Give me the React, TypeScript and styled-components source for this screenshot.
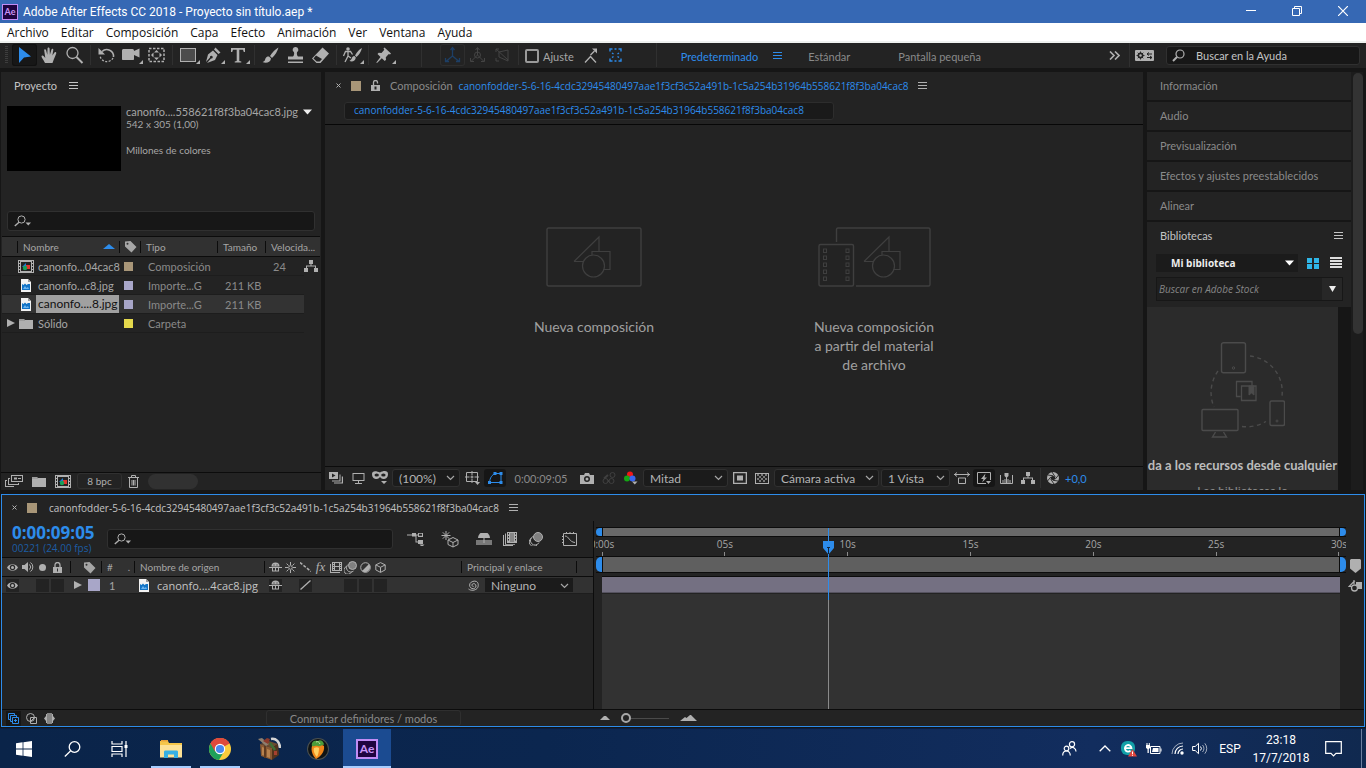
import React from "react";
import styled, { createGlobalStyle, css } from "styled-components";

const ui = '"Lato", "Open Sans", sans-serif';
const sys = '"Open Sans", "Noto Sans", sans-serif';
const narrow = '"Roboto", "Open Sans", sans-serif';

const c = {
  gap: "#161616",
  panel: "#232323",
  head: "#313131",
  field: "#171717",
  line: "#303030",
  text: "#a6a6a6",
  bright: "#c4c4c4",
  dim: "#8a8a8a",
  icon: "#b0b0b0",
  blue: "#2d8ceb",
};

const GlobalStyle = createGlobalStyle`
  *, *::before, *::after { box-sizing: border-box; }
  body { margin: 0; background: ${c.gap}; font-family: ${ui}; font-size: 11px; color: ${c.text}; }
  button, input, select { font: inherit; color: inherit; margin: 0; padding: 0; border: 0; background: none; border-radius: 0; }
  a { color: inherit; text-decoration: none; }
  h2, p { margin: 0; font-weight: 400; font-size: inherit; }
  svg { display: block; flex: none; }
`;

const Shell = styled.div`
  display: grid;
  grid-template-columns: minmax(0, 1fr);
  grid-template-rows: auto auto auto minmax(300px, 1fr) auto auto;
  height: 100vh;
`;

/* ---------- glyphs ---------- */

type GlyphProps = { w: number; h: number; children: React.ReactNode; line?: boolean };
const Glyph = ({ w, h, children, line }: GlyphProps) => (
  <svg
    width={w}
    height={h}
    viewBox={`0 0 ${w} ${h}`}
    fill={line ? "none" : "currentColor"}
    stroke={line ? "currentColor" : "none"}
    aria-hidden="true"
  >
    {children}
  </svg>
);

const MenuLines = () => (
  <Glyph w={9} h={8}>
    <path d="M0 0h9v1H0zM0 3h9v1H0zM0 6h9v1H0z" />
  </Glyph>
);
const CloseX = () => (
  <Glyph w={5} h={5} line>
    <path d="M.5.5l4 4M4.500.5l-4 4" />
  </Glyph>
);
const Chevron = () => (
  <Glyph w={9} h={6} line>
    <path d="M1 1l3.500 3.500L8 1" strokeWidth="1.200" />
  </Glyph>
);
const Caret = () => (
  <Glyph w={9} h={6}>
    <path d="M0 .5h9L4.500 5.500z" />
  </Glyph>
);
const SearchCaret = () => (
  <Glyph w={18} h={12}>
    <g fill="none" stroke="currentColor">
      <circle cx="7.500" cy="4.500" r="3.600" />
      <path d="M5 7.200L.8 11" strokeWidth="1.400" />
    </g>
    <path d="M11.500 7.500h5.500L14.300 10.500z" />
  </Glyph>
);
const Lens = () => (
  <Glyph w={13} h={13} line>
    <circle cx="8" cy="5" r="4" strokeWidth="1.200" />
    <path d="M5 8L1 12" strokeWidth="2" />
  </Glyph>
);
const Corner = () => <path d="M24 16v4h-4z" />;

const Tool = ({ children, corner }: { children: React.ReactNode; corner?: boolean }) => (
  <Glyph w={25} h={22}>
    {children}
    {corner && <Corner />}
  </Glyph>
);

const Tag = () => (
  <Glyph w={13} h={13}>
    <path d="M1 1.500L6.500 1 12.500 7 7.500 12.500 1 6.500zM3.500 2.700a1 1 0 100 2 1 1 0 000-2z" fillRule="evenodd" />
  </Glyph>
);
const CompIcon = () => (
  <Glyph w={16} h={13}>
    <path d="M0 0h16v13H0z" />
    <path d="M3 2h10v9H3z" fill="#222" />
    <path d="M1 1h1v2H1zM1 4h1v2H1zM1 7h1v2H1zM1 10h1v2H1zM14 1h1v2h-1zM14 4h1v2h-1zM14 7h1v2h-1zM14 10h1v2h-1z" fill="#222" />
    <path d="M4 7l4-4v4z" fill="#1f7fd8" />
    <path d="M8 5h4v4H8z" fill="#e0342c" />
    <circle cx="7" cy="8" r="2.200" fill="#18a05a" />
  </Glyph>
);
const ImageFile = () => (
  <Glyph w={10} h={13}>
    <path d="M0 0h7l3 3v10H0z" fill="#f2f2f2" />
    <path d="M7 0l3 3H7z" fill="#9a9a9a" />
    <path d="M1 5l1.500 1L4 4.500 5.500 6 7 5l2 0v6H1z" fill="#1173c6" />
    <path d="M2 10l2-3 1.500 2L7 8l1 2z" fill="#6bb4f0" />
  </Glyph>
);
const Folder = () => (
  <Glyph w={14} h={11}>
    <path d="M0 1h5l1 1h8v9H0z" />
    <path d="M0 2h6" stroke="#6f6f6f" strokeWidth=".6" />
  </Glyph>
);
const Flow = () => (
  <Glyph w={14} h={12}>
    <path d="M5 0h4v4H7.500v1.500H12V8h2v4H10V8h1V6.500H3V8h1v4H0V8h2V5.500h4.500V4H5z" />
  </Glyph>
);
const Eye = () => (
  <Glyph w={11} h={7}>
    <path d="M0 3.500C2.500-.8 8.500-.8 11 3.500 8.500 7.800 2.500 7.800 0 3.500z" />
    <circle cx="5.500" cy="3.500" r="2.700" fill="#2a2a2a" />
    <circle cx="5.500" cy="3.500" r="1.500" />
  </Glyph>
);
const Shy = () => (
  <Glyph w={13} h={10}>
    <path d="M2.500 4.500a4 4 0 018 0z" />
    <path d="M0 5h13v1H0zM3 8.500h7v1H3zM6 5h1v4H6z" />
    <path d="M4.500 2.500h1v1h-1zM7.500 2.500h1v1h-1z" fill="#2a2a2a" />
    <path d="M3.500 6v3M9.500 6v3" stroke="currentColor" />
  </Glyph>
);
const FilmStack = () => (
  <Glyph w={12} h={11}>
    <path d="M0 2h1v8h9v1H0z" />
    <path d="M2 0h10v9H2z" />
    <path d="M5 1h4v3H5zM5 5h4v3H5zM3 1h1v1H3zM3 3h1v1H3zM3 5h1v1H3zM3 7h1v1H3zM10 1h1v1h-1zM10 3h1v1h-1zM10 5h1v1h-1zM10 7h1v1h-1z" fill="#333" />
  </Glyph>
);
const MotionBlur = () => (
  <Glyph w={13} h={13}>
    <circle cx="8.500" cy="4.500" r="4" fill="#808080" stroke="currentColor" />
    <path d="M4 3.500a4.200 4.200 0 105.500 6.500M2.500 5.500a4 4 0 105 5.500" fill="none" stroke="currentColor" />
  </Glyph>
);
const Cube = () => (
  <Glyph w={11} h={11} line>
    <path d="M5.500.6l4.700 2.300v5L5.500 10.400.8 7.900v-5zM.8 2.900l4.700 2.400 4.700-2.400M5.500 5.300v5" />
  </Glyph>
);

/* ---------- window chrome ---------- */

const TitleBar = styled.header`
  display: flex;
  align-items: center;
  height: 23px;
  padding-left: 2px;
  background: #3668b4;
  color: #fff;
  font: 12px/16px ${narrow};
`;
const AeBadge = styled.span<{ $big?: boolean }>`
  display: grid;
  place-items: center;
  width: ${(p) => (p.$big ? 22 : 16)}px;
  height: ${(p) => (p.$big ? 20 : 16)}px;
  border: ${(p) => (p.$big ? 2 : 1)}px solid #c18df5;
  background: #1f0540;
  color: #c795f7;
  font: ${(p) => (p.$big ? "700 12px/14px" : "700 9px/12px")} ${ui};
`;
const Title = styled.h2`
  flex: 1;
  padding-left: 5px;
`;
const WinButton = styled.button`
  display: grid;
  place-items: center;
  width: 46px;
  height: 23px;
  padding-bottom: 2px;
`;
const MenuBar = styled.nav`
  display: flex;
  gap: 12px;
  height: 20px;
  padding-left: 7px;
  background: #fff;
  border-bottom: 2px solid #eef1ef;
  color: #111;
  font: 12px/20px ${sys};
`;

/* ---------- tool bar ---------- */

const ToolBar = styled.div`
  display: flex;
  align-items: center;
  height: 29px;
  padding: 0 6px 1px 5px;
  background: ${c.panel};
  border-bottom: 4px solid ${c.gap};
  color: ${c.icon};
`;
const Grip = styled.span`
  width: 3px;
  height: 18px;
  margin-right: 4px;
  background: repeating-linear-gradient(#3d3d3d 0 1px, transparent 1px 2px);
`;
const ToolButton = styled.button<{ $on?: boolean; $boxed?: boolean; $tone?: string }>`
  width: 25px;
  height: 22px;
  color: ${(p) => p.$tone ?? c.icon};
  ${(p) =>
    p.$on &&
    css`
      color: ${c.blue};
      background: #171717;
      box-shadow: inset 0 0 0 1px #111;
      border-radius: 3px;
    `}
  ${(p) =>
    p.$boxed &&
    css`
      box-shadow: inset 0 0 0 1px #2e2e2e;
      border-radius: 3px;
    `}
`;
const Sep = styled.span<{ $tall?: boolean; $tight?: boolean }>`
  width: 1px;
  height: ${(p) => (p.$tall ? 24 : 20)}px;
  margin: 0 ${(p) => (p.$tight ? 1 : 3)}px;
  background: #303030;
`;
const Spacer = styled.span<{ $w?: number }>`
  flex: ${(p) => (p.$w ? `0 0 ${p.$w}px` : "1")};
`;
const Snap = styled.label`
  display: flex;
  align-items: center;
  gap: 4px;
  margin-right: 4px;
  padding-top: 2px;
  color: ${c.text};
  input {
    appearance: none;
    width: 14px;
    height: 14px;
    border: 2px solid #9a9a9a;
    border-radius: 2px;
  }
`;
const Workspaces = styled.nav`
  display: flex;
  align-items: center;
  padding: 2px 0 0 21px;
  gap: 48px;
  a { color: ${c.dim}; }
  span { display: flex; align-items: center; gap: 15px; margin-right: -22px; }
  span, span a { color: ${c.blue}; }
`;
const HelpSearch = styled.label`
  display: flex;
  align-items: center;
  gap: 11px;
  width: 194px;
  height: 19px;
  margin-left: 12px;
  padding: 0 5px;
  background: ${c.field};
  border: 1px solid ${c.line};
  border-radius: 3px;
  color: ${c.icon};
  input { flex: 1; min-width: 0; outline: 0; }
  input::placeholder { color: ${c.bright}; opacity: 1; }
`;

/* ---------- panels ---------- */

const Workspace = styled.main`
  display: grid;
  grid-template-columns: 320px minmax(0, 1fr) 216px;
  gap: 4px;
  min-height: 0;
  padding: 0 3px 4px 1px;
`;
const Panel = styled.section`
  display: flex;
  flex-direction: column;
  min-width: 0;
  min-height: 0;
  background: ${c.panel};
`;
const PanelTab = styled.header`
  display: flex;
  align-items: center;
  gap: 12px;
  height: 28px;
  flex: none;
  padding: 0 0 1px 13px;
  color: ${c.bright};
`;
const Swatch = styled.i<{ $color: string; $size?: number }>`
  display: block;
  flex: none;
  width: ${(p) => p.$size ?? 10}px;
  height: ${(p) => p.$size ?? 10}px;
  background: ${(p) => p.$color};
`;
const Preview = styled.div`
  display: flex;
  gap: 5px;
  padding: 6px 6px 0;
`;
const Thumb = styled.div`
  flex: none;
  width: 114px;
  height: 65px;
  background: #000;
`;
const Meta = styled.div`
  font-size: 10px;
  line-height: 13px;
  white-space: nowrap;
  strong {
    display: flex;
    align-items: center;
    gap: 5px;
    font-size: 11px;
    font-weight: 400;
    line-height: 12px;
    color: ${c.text};
  }
  strong svg { color: #eee; }
  p + p { margin-top: 13px; }
`;
const SearchField = styled.label<{ $flush?: boolean }>`
  display: flex;
  align-items: center;
  height: 20px;
  flex: none;
  margin: ${(p) => (p.$flush ? "0" : "40px 6px 5px")};
  padding: 0 6px;
  background: ${c.field};
  border: 1px solid ${c.line};
  border-radius: 3px;
  color: ${c.icon};
  input { flex: 1; min-width: 0; outline: 0; }
`;
const Files = styled.table`
  width: 318px;
  margin-left: 1px;
  border-collapse: collapse;
  table-layout: fixed;
  th, td { padding: 0; text-align: left; white-space: nowrap; font-weight: 400; }
  thead tr { height: 20px; background: ${c.head}; border: solid #0c0c0c; border-width: 1px 0; }
  th { font-size: 10px; }
  tbody tr { height: 19px; }
  tbody td { color: ${c.dim}; }
  tbody td:last-child, tbody td:first-child { color: ${c.icon}; }
`;
const HeadCell = styled.span<{ $pad?: number }>`
  display: flex;
  align-items: center;
  justify-content: space-between;
  height: 12px;
  padding: 0 4px 0 ${(p) => p.$pad ?? 5}px;
  border-left: 1px solid #0c0c0c;
`;
const Row = styled.tr<{ $selected?: boolean }>`
  td:not(:last-child) {
    border-bottom: 1px solid #1d1d1d;
    background: ${(p) => (p.$selected ? "#333" : "transparent")};
  }
`;
const NameCell = styled.span<{ $selected?: boolean }>`
  display: flex;
  align-items: center;
  gap: ${(p) => (p.$selected ? 2 : 4)}px;
  color: ${c.text};
  b {
    font-weight: 400;
    ${(p) => p.$selected && css`
      padding: 0 2px;
      line-height: 18px;
      width: 83px;
      font-size: 12px;
      background: #a0a0a0;
      color: #111;
    `}
  }
`;
const IconSlot = styled.span`
  display: flex;
  justify-content: center;
  width: 16px;
  margin-left: 1px;
  color: ${c.icon};
`;
const Num = styled.span`
  padding-left: 8px;
`;
const Spaced = styled.span`
  display: block;
  padding-left: 5px;
`;
const FootBar = styled.footer`
  display: flex;
  align-items: center;
  flex: none;
  height: 24px;
  padding-bottom: 1px;
  border-top: 1px solid #0c0c0c;
  color: ${c.icon};
`;
const ProjectFoot = styled(FootBar)`
  height: 18px;
  margin-top: auto;
  padding-left: 4px;
  gap: 9px;
`;
const Depth = styled.button`
  height: 16px;
  width: 45px;
  border: 1px solid #303030;
  border-radius: 3px;
  font-size: 10px;
  line-height: 13px;
  margin: 0 -3px;
`;
const ScrollPill = styled.span`
  width: 50px;
  height: 15px;
  border-radius: 8px;
  background: #313131;
`;

/* ---------- composition ---------- */

const CompTab = styled(PanelTab)`
  padding-left: 11px;
  gap: 10px;
  color: ${c.dim};
  white-space: nowrap;
  svg { color: ${c.icon}; }
  a { color: ${c.blue}; margin-left: -4px; font-family: ${sys}; font-size: 10px; }
`;
const Crumbs = styled.div`
  padding: 2px 18px 4px 19px;
  border-bottom: 1px solid #070707;
  a {
    display: block;
    width: 490px;
    max-width: 100%;
    height: 18px;
    padding: 0 9px;
    border: 1px solid #2d2d2d;
    border-radius: 3px;
    background: #1a1a1a;
    color: ${c.blue};
    font: 10px/15px ${sys};
    overflow: hidden;
    white-space: nowrap;
  }
`;
const Viewer = styled.div`
  display: flex;
  flex: 1;
  min-height: 0;
  justify-content: center;
  align-items: center;
  padding-top: 11px;
`;
const Starter = styled.button`
  display: flex;
  flex-direction: column;
  align-items: center;
  align-self: center;
  gap: 30px;
  width: 280px;
  height: 148px;
  font-size: 14px;
  line-height: 19px;
  color: #a0a0a0;
  svg { color: #3f3f3f; }
  span { width: 130px; }
`;
const ViewButton = styled.button<{ $on?: boolean; $faded?: boolean; $flip?: boolean }>`
  display: grid;
  place-items: center;
  width: 22px;
  height: 18px;
  color: ${(p) => (p.$faded ? "#404040" : p.$on && !p.$flip ? c.blue : c.icon)};
  ${(p) => p.$on && css`
    background: #161616;
    border-radius: 3px;
  `}
`;
const Drop = styled.label<{ $w: number; $flat?: boolean }>`
  display: grid;
  align-items: center;
  width: ${(p) => p.$w}px;
  height: ${(p) => (p.$flat ? 14 : 18)}px;
  margin: 0 1px;
  border: ${(p) => (p.$flat ? 0 : 1)}px solid ${c.line};
  border-radius: ${(p) => (p.$flat ? 0 : 3)}px;
  background: #1b1b1b;
  color: ${c.text};
  font-size: 12px;
  select {
    grid-area: 1 / 1;
    appearance: none;
    width: 100%;
    padding-left: 6px;
    color: #b4b4b4;
  }
  svg { grid-area: 1 / 1; justify-self: end; margin-right: 4px; pointer-events: none; }
`;
const TimeText = styled.span`
  width: 70px;
  text-align: center;
  color: ${c.dim};
`;
const Exposure = styled.a`
  padding-left: 1px;
  color: ${c.blue};
`;

/* ---------- side column ---------- */

const Side = styled.aside`
  display: grid;
  grid-template-columns: minmax(0, 1fr) 10px;
  gap: 2px;
  min-height: 0;
  background: #1c1c1c;
`;
const SideStack = styled.div`
  display: flex;
  flex-direction: column;
  min-height: 0;
  background: ${c.panel};
`;
const SideTab = styled.button`
  height: 30px;
  flex: none;
  padding: 0 13px 2px;
  border-bottom: 2px solid ${c.gap};
  text-align: left;
  color: ${c.dim};
`;
const LibTab = styled(PanelTab)`
  justify-content: space-between;
  padding-right: 8px;
`;
const SideScroll = styled.span`
  height: 261px;
  border-radius: 6px;
  margin-top: 1px;
  background: #333;
`;
const LibTools = styled.div`
  display: grid;
  grid-template-columns: minmax(0, 1fr) 14px 14px;
  align-items: center;
  gap: 9px;
  padding: 4px 7px 4px 9px;
  color: #ddd;
`;
const LibPick = styled.label`
  display: grid;
  align-items: center;
  height: 18px;
  background: #1b1b1b;
  font: 700 10px/16px ${sys};
  select { grid-area: 1 / 1; appearance: none; padding-left: 15px; color: #eee; font-weight: 700; }
  svg { grid-area: 1 / 1; justify-self: end; margin-right: 4px; pointer-events: none; color: #fff; }
`;
const StockSearch = styled.div`
  display: flex;
  height: 24px;
  flex: none;
  margin: 1px 8px 6px 9px;
  border: 1px solid #171717;
  background: #1f1f1f;
  font: italic 10px/20px ${sys};
  input { flex: 1; min-width: 0; padding-left: 2px; outline: 0; }
  input::placeholder { color: #858585; opacity: 1; }
  button { display: grid; place-items: center; width: 20px; background: #272727; color: #eee; }
`;
const Library = styled.div`
  display: flex;
  flex-direction: column;
  align-items: center;
  flex: 1;
  min-height: 0;
  padding: 35px 0 0;
  border-right: 13px solid ${c.gap};
  background: #2b2b2b;
  overflow: hidden;
  color: #bcbcbc;
  white-space: nowrap;
  svg { color: #4b4b4b; }
  strong { margin: 16px 0 7px; font: 700 13px/20px ${ui}; }
  p { font: 600 11px/18px ${sys}; color: #858585; }
`;

/* ---------- timeline ---------- */

const Timeline = styled.section`
  display: flex;
  flex-direction: column;
  min-height: 233px;
  margin: 0 1px 1px;
  border: 1px solid ${c.blue};
  background: ${c.panel};
`;
const TimelineTab = styled(CompTab)`
  height: 26px;
  gap: 10px;
  padding-left: 10px;
  color: ${c.bright};
  span { margin-left: 2px; font-family: ${sys}; font-size: 10px; }
`;
const TimelineBody = styled.div`
  display: grid;
  grid-template-columns: 592px minmax(0, 1fr) 18px;
  flex: 1;
`;
const Layers = styled.div`
  display: flex;
  flex-direction: column;
  border-right: 1px solid #0c0c0c;
`;
const Controls = styled.div`
  display: flex;
  align-items: center;
  height: 36px;
  padding: 0 0 0 10px;
  color: ${c.icon};
`;
const TimeCode = styled.div`
  width: 95px;
  font: 10px/12px ${sys};
  color: #1c5da3;
  strong { display: block; font: 700 17px/18px ${sys}; color: ${c.blue}; }
`;
const LayerSearch = styled(SearchField)`
  width: 286px;
  margin-right: 8px;
`;
const ControlButton = styled.button<{ $w: number }>`
  display: grid;
  place-items: center;
  width: ${(p) => p.$w}px;
  height: 24px;
`;
const LayerTable = styled.table`
  width: 100%;
  table-layout: fixed;
  border-collapse: collapse;
  th, td { padding: 0; text-align: left; font-weight: 400; white-space: nowrap; }
  thead tr { height: 19px; background: ${c.head}; border: solid #0c0c0c; border-width: 1px 0; color: ${c.icon}; }
  th { font-size: 10px; color: ${c.text}; }
  tbody tr { height: 17px; background: #323232; border-bottom: 1px solid #1d1d1d; }
`;
const Center = styled.span<{ $box?: boolean }>`
  display: grid;
  place-items: center;
  width: ${(p) => (p.$box ? 13 : 15)}px;
  height: 13px;
  margin: ${(p) => (p.$box ? "0 1px" : "0")};
  background: ${(p) => (p.$box ? "#232323" : "transparent")};
  color: ${c.icon};
`;
const LayerName = styled.span`
  display: flex;
  align-items: center;
  gap: 8px;
  padding-left: 5px;
  font: 11px/15px ${sys};
  color: ${c.bright};
`;
const ParentCell = styled.span`
  display: flex;
  align-items: center;
  gap: 5px;
  padding-left: 6px;
  color: ${c.icon};
`;
const Fx = styled.i`
  font: italic 13px/12px "Liberation Serif", serif;
  color: ${c.icon};
`;
const EndMark = styled.i`
  height: 12px;
  margin-right: 12px;
  border-left: 1px solid #0c0c0c;
`;
const RightGlyph = styled.span`
  display: flex;
  justify-content: flex-end;
  padding-right: 1px;
  color: ${c.icon};
`;
const Tracks = styled.div`
  position: relative;
  display: flex;
  flex-direction: column;
  min-width: 0;
  overflow: hidden;
  padding: 6px 0 0 2px;
`;
const Range = styled.div<{ $h: number; $tone: string }>`
  display: grid;
  grid-template-columns: 6px minmax(0, 1fr) 6px;
  height: ${(p) => p.$h}px;
  border: solid #0c0c0c;
  border-width: 1px 0;
  i { background: ${c.blue}; border-radius: 5px 0 0 5px; }
  i:last-child { border-radius: 0 5px 5px 0; }
  span { background: ${(p) => p.$tone}; border: solid #0c0c0c; border-width: 0 1px; }
`;
const Ruler = styled.div`
  display: flex;
  justify-content: space-between;
  height: 19px;
  padding: 1px 7px 0 6px;
  font: 10px/12px ${sys};
  color: ${c.text};
`;
const Mark = styled.span`
  display: flex;
  flex-direction: column;
  align-items: center;
  gap: 2px;
  width: 0;
  white-space: nowrap;
  &::after { content: ""; flex: 1; width: 1px; background: #8c8c8c; }
`;
const LayerBar = styled.div`
  height: 17px;
  margin: 3px 6px 0;
  background: #747082;
  border: solid #0c0c0c;
  border-width: 1px 0;
  border-bottom-color: #55525f;
`;
const Lane = styled.div`
  flex: 1;
  margin: 1px 6px 0;
  background: #323232;
`;
const Overlay = styled.div`
  position: absolute;
  inset: 7px 7px 0 8px;
  pointer-events: none;
`;
const Playhead = styled.div`
  position: absolute;
  top: 0;
  bottom: 0;
  width: 1px;
  background: linear-gradient(${c.blue} 0 72px, #8a8a8a 72px);
  svg { position: absolute; top: 13px; left: -5px; }
`;
const MarkerColumn = styled.div`
  display: flex;
  flex-direction: column;
  align-items: center;
  gap: 7px;
  padding-top: 38px;
  color: ${c.icon};
`;
const TimelineFoot = styled(FootBar)`
  height: 17px;
  padding: 0 0 0 4px;
  gap: 3px;
`;
const FootButton = styled.button<{ $on?: boolean }>`
  display: grid;
  place-items: center;
  width: 15px;
  height: 15px;
  color: ${(p) => (p.$on ? c.blue : c.icon)};
  background: ${(p) => (p.$on ? "#161616" : "none")};
`;
const ToggleModes = styled.button`
  width: 195px;
  height: 16px;
  margin: 0 136px 0 206px;
  border: 1px solid #2f2f2f;
  border-radius: 3px;
  color: ${c.dim};
  font-size: 11px;
  line-height: 13px;
`;
const ZoomSlider = styled.input`
  appearance: none;
  width: 48px;
  height: 1px;
  margin: 0 8px;
  background: #4a4a4a;
  &::-webkit-slider-thumb {
    appearance: none;
    width: 10px;
    height: 10px;
    border: 2px solid #a8a8a8;
    border-radius: 50%;
    background: ${c.panel};
  }
`;

/* ---------- task bar ---------- */

const TaskBar = styled.nav`
  display: flex;
  height: 40px;
  border-top: 1px solid #0a1d40;
  background: linear-gradient(90deg, #0a2449, #0b264f 40%, #122d5e 80%, #10294f);
  color: #fff;
  font: 12px/18px ${narrow};
`;
const TaskItem = styled.button<{ $open?: boolean; $active?: boolean; $first?: boolean }>`
  display: grid;
  place-items: center;
  width: 48px;
  margin-left: ${(p) => (p.$first ? 3 : 0)}px;
  margin-right: 1px;
  background: ${(p) =>
    p.$active
      ? "#1b4b91"
      : p.$open
        ? "linear-gradient(#a6cdff, #a6cdff) 50% 100% / 40px 2px no-repeat"
        : "none"};
  box-shadow: ${(p) => (p.$active ? "inset 0 -2px #a6cdff" : "none")};
`;
const SystemItem = styled(TaskItem)`
  margin-right: 0;
`;
const TrayItem = styled.button<{ $w: number }>`
  display: grid;
  place-items: center;
  width: ${(p) => p.$w}px;
`;
const Clock = styled.button`
  width: 66px;
  margin-left: 5px;
  text-align: center;
  white-space: nowrap;
`;
const ShowDesktop = styled.button`
  width: 5px;
  border-left: 1px solid #6c7f9f;
`;

const COMP = "canonfodder-5-6-16-4cdc32945480497aae1f3cf3c52a491b-1c5a254b31964b558621f8f3ba04cac8";

const Shapes = ({ x }: { x: number }) => (
  <g strokeWidth="1.200">
    <path d={`M${x} 34.500h9M${x} 34.500L${x + 25} 10v14.500M${x + 18} 28v-3.500h18v18h-7`} />
    <circle cx={x + 19.5} cy="39" r="11" />
  </g>
);

const menu = ["Archivo", "Editar", "Composición", "Capa", "Efecto", "Animación", "Ver", "Ventana", "Ayuda"];
const sideTabs = ["Información", "Audio", "Previsualización", "Efectos y ajustes preestablecidos", "Alinear"];
const files = [
  { name: "canonfo...04cac8", color: "#a89678", type: "Composición", size: "", rate: "24", kind: "comp" },
  { name: "canonfo...c8.jpg", color: "#a8a6c8", type: "Importe...G", size: "211 KB", rate: "", kind: "image" },
  { name: "canonfo....8.jpg", color: "#a8a6c8", type: "Importe...G", size: "211 KB", rate: "", kind: "image", selected: true },
  { name: "Sólido", color: "#e4d84c", type: "Carpeta", size: "", rate: "", kind: "folder" },
];
const marks = ["0:00s", "05s", "10s", "15s", "20s", "25s", "30s"];

function Tools() {
  return (
    <ToolBar>
      <Grip />
      <ToolButton $on aria-label="Selección"><Tool><path d="M7 3l12 9.500-7 1-5 5.500z" /></Tool></ToolButton>
      <ToolButton aria-label="Mano">
        <Tool>
          <path d="M8 19C6.500 16 4.500 13.500 4.500 12.500c0-1.200 1.500-1.300 2.300-.3L8.300 14 7.200 6.500c-.2-1.500 1.500-1.700 1.900-.3l1.200 4.500.2-6c0-1.500 2-1.500 2.100 0l.3 6 1.500-5c.4-1.300 2.100-1 1.900.4l-.9 5.400 2-3c.8-1.200 2.300-.4 1.800.9-1 2.600-2 5.200-2.600 6.600L15.500 19z" />
        </Tool>
      </ToolButton>
      <ToolButton aria-label="Zoom">
        <Tool>
          <circle cx="10.500" cy="9" r="5.500" fill="none" stroke="currentColor" strokeWidth="1.300" />
          <path d="M14.500 13l6 6" stroke="currentColor" strokeWidth="2" />
        </Tool>
      </ToolButton>
      <Sep />
      <ToolButton aria-label="Rotación">
        <Tool>
          <path d="M8 7.500A6.800 6.800 0 0119.500 13" fill="none" stroke="currentColor" strokeWidth="1.500" />
          <path d="M19 14a7 7 0 01-13-2" fill="none" stroke="currentColor" strokeWidth="1.200" strokeDasharray="2 1.500" />
          <path d="M4.500 4v6.500H11z" />
        </Tool>
      </ToolButton>
      <ToolButton aria-label="Cámara">
        <Tool corner>
          <path d="M3 6.500C3 5 4 5 5 5h8.500c1 0 1.500.8 1.500 2l5.500-2.500v9L15 11v4c0 .6-.4 1-1 1H4c-.6 0-1-.4-1-1z" />
        </Tool>
      </ToolButton>
      <ToolButton aria-label="Panorámica trasera">
        <Tool>
          <rect x="5" y="4.500" width="15" height="13" fill="none" stroke="currentColor" strokeWidth="1.500" strokeDasharray="2.500 1.500" />
          <path d="M12.500 6l2.500 2.500h-5zM12.500 16l2.500-2.500h-5zM7 11l2.500-2.500v5zM18 11l-2.500-2.500v5z" />
        </Tool>
      </ToolButton>
      <Sep />
      <ToolButton aria-label="Rectángulo">
        <Tool corner><rect x="4.500" y="4.500" width="15" height="13" fill="#4c4c4c" stroke="currentColor" /></Tool>
      </ToolButton>
      <ToolButton aria-label="Pluma">
        <Tool corner>
          <path d="M14.500 3.500l5 5-2 1.500-4.500-4.500zM12 6.500l4.500 4.500-2.500 5-8 3 4-4.500a1.400 1.400 0 10-1-1L5 18l2-7.500z" />
        </Tool>
      </ToolButton>
      <ToolButton aria-label="Texto">
        <Tool corner><path d="M5 4h14v4h-1.200l-.8-2.200h-3.700V17l2 .5v1H8.700v-1l2-.5V5.800H7L6.200 8H5z" /></Tool>
      </ToolButton>
      <Sep />
      <ToolButton aria-label="Pincel">
        <Tool>
          <path d="M20.500 3.500c-3 1.500-6.500 5-8.500 8.500l2 2c3-2.500 5.500-7 6.500-10.500zM11 12.500c-3-.2-3.500 2-4 3.500-.4 1.200-1.500 1.500-2.500 2 3 1.500 8 .8 8.500-3.500z" />
        </Tool>
      </ToolButton>
      <ToolButton aria-label="Tampón">
        <Tool>
          <path d="M12.500 3a2.800 2.800 0 00-1.500 5.200c.4 1.500 0 3.300-1 4.300H5v3h15v-3h-5c-1-1-1.400-2.800-1-4.300A2.800 2.800 0 0012.500 3zM5 17.500h15V19H5z" />
        </Tool>
      </ToolButton>
      <ToolButton aria-label="Borrador">
        <Tool>
          <path d="M14.500 3.500l6.500 6-8.500 9.500h-4L4 14.500zM8 11.500l-2.500 3 3.200 3h3L14 15z" fillRule="evenodd" />
        </Tool>
      </ToolButton>
      <Sep />
      <ToolButton aria-label="Pincel de rotoscopia">
        <Tool corner>
          <circle cx="8" cy="5" r="1.800" />
          <path d="M3.500 12l2-4.500h5l2 3M8 7v5l-3 6M8 12l3 2" fill="none" stroke="currentColor" strokeWidth="1.300" />
          <path d="M22 4c-3 1.500-5 4-7 7.500l1.500 1.500C19 11 21 8 22 4zM14.500 12c-2 0-2.500 1.500-3 3l-2 2c2.500 1 6 .3 6.300-3.500z" />
        </Tool>
      </ToolButton>
      <Sep />
      <ToolButton aria-label="Posición libre">
        <Tool corner>
          <path d="M12.500 3.500l6.500 6-1 1-1.200-.4-3 3.200.2 2.500-1.200 1.200-3-2.700L5 19l-.7-.5L8.500 13 5.500 10l1.200-1.200 2.800.2 2.800-3.200-.8-1.300z" />
        </Tool>
      </ToolButton>
      <Spacer $w={21} />
      <Sep $tall />
      <Spacer $w={15} />
      <ToolButton $boxed $tone="#1d3f66" aria-label="Ejes locales">
        <Tool><path d="M12.500 4v8l-6 5M12.500 12l6 5M10.500 6l2-2.500 2 2.500M5.500 14v3.500H9M19.500 14v3.500H16" fill="none" stroke="currentColor" strokeWidth="1.300" /></Tool>
      </ToolButton>
      <ToolButton $tone="#444" aria-label="Ejes del mundo">
        <Tool><circle cx="12.500" cy="11" r="3" fill="none" stroke="currentColor" /><path d="M12.500 4v7l-6 6M12.500 11l6 6M10.500 6l2-2.500 2 2.500M5.500 14v3.500H9M19.500 14v3.500H16" fill="none" stroke="currentColor" /></Tool>
      </ToolButton>
      <ToolButton $tone="#444" aria-label="Ejes de vista">
        <Tool><path d="M6 8V5h3M6 5l12 11M9 8l9-2v11l-9-4zM6 14v3h3" fill="none" stroke="currentColor" /></Tool>
      </ToolButton>
      <Sep />
      <Spacer $w={3} />
      <Snap><input type="checkbox" />Ajuste</Snap>
      <ToolButton aria-label="Ajustar bordes">
        <Tool><path d="M7 18.500l5.500-6 5.500 6M12.500 11l4-4" fill="none" stroke="currentColor" strokeWidth="1.300" /><path d="M14 4.500h5v5z" /></Tool>
      </ToolButton>
      <ToolButton $tone={c.blue} aria-label="Ajustar a capas">
        <Tool><path d="M7 7.500V5h2.500M15.500 5H18v2.500M18 14.500V17h-2.500M9.500 17H7v-2.500M9 9l1.500 1M16 9l-1.500 1M9 13.500l1.500-1M16 13.500l-1.500-1M11.500 5h2M11.500 17h2" fill="none" stroke="currentColor" strokeWidth="1.400" /></Tool>
      </ToolButton>
      <Spacer $w={25} />
      <Sep $tall />
      <Workspaces>
        <span><a href="#predeterminado">Predeterminado</a><MenuLines /></span>
        <a href="#estandar">Estándar</a>
        <a href="#pequena">Pantalla pequeña</a>
      </Workspaces>
      <Spacer />
      <Glyph w={11} h={9} line><path d="M1 .5l4 4-4 4M6 .5l4 4-4 4" strokeWidth="1.600" /></Glyph>
      <Spacer $w={6} />
      <Sep $tall />
      <Spacer $w={2} />
      <Glyph w={19} h={11}>
        <rect width="19" height="11" rx="1" />
        <circle cx="5.500" cy="5.500" r="2.200" fill="none" stroke="#222" strokeWidth="1.500" />
        <path d="M5.500 1.500v8M1.500 5.500h8M2.700 2.700l5.600 5.600M8.300 2.700L2.700 8.300" stroke="#222" strokeWidth=".9" />
        <circle cx="5.500" cy="5.500" r="1.200" />
        <path d="M12 4h5M14 2.500L12 4l2 1.500M12 7.500h5M15 6l2 1.500L15 9" stroke="#222" fill="none" />
      </Glyph>
      <HelpSearch><Lens /><input aria-label="Buscar en la Ayuda" placeholder="Buscar en la Ayuda" /></HelpSearch>
    </ToolBar>
  );
}

function Project() {
  return (
    <Panel>
      <PanelTab>Proyecto<MenuLines /></PanelTab>
      <Preview>
        <Thumb />
        <Meta>
          <strong>canonfo....558621f8f3ba04cac8.jpg<Caret /></strong>
          <p>542 x 305 (1,00)</p>
          <p>Millones de colores</p>
        </Meta>
      </Preview>
      <SearchField><SearchCaret /><input aria-label="Buscar en el proyecto" /></SearchField>
      <Files>
        <colgroup>
          <col style={{ width: 15 }} /><col style={{ width: 102 }} /><col style={{ width: 21 }} /><col style={{ width: 77 }} />
          <col style={{ width: 48 }} /><col style={{ width: 39 }} /><col />
        </colgroup>
        <thead>
          <tr>
            <th />
            <th><HeadCell>Nombre<Glyph w={12} h={5}><path d="M0 5L6 0l6 5z" fill={c.blue} /></Glyph></HeadCell></th>
            <th><HeadCell $pad={4}><Tag /></HeadCell></th>
            <th><HeadCell>Tipo</HeadCell></th>
            <th><HeadCell>Tamaño</HeadCell></th>
            <th colSpan={2}><HeadCell>Velocida...</HeadCell></th>
          </tr>
        </thead>
        <tbody>
          {files.map((f, i) => (
            <Row key={i} $selected={f.selected}>
              <td>{f.kind === "folder" && <Spaced><Glyph w={8} h={8}><path d="M0 0l8 4-8 4z" /></Glyph></Spaced>}</td>
              <td>
                <NameCell $selected={f.selected}>
                  <IconSlot>
                    {f.kind === "comp" ? <CompIcon /> : f.kind === "image" ? <ImageFile /> : <Folder />}
                  </IconSlot>
                  <b>{f.name}</b>
                </NameCell>
              </td>
              <td><Spaced><Swatch $color={f.color} $size={9} /></Spaced></td>
              <td><Num>{f.type}</Num></td>
              <td><Num>{f.size}</Num></td>
              <td><Num>{f.rate}</Num></td>
              <td>{f.kind === "comp" && <Flow />}</td>
            </Row>
          ))}
        </tbody>
      </Files>
      <ProjectFoot>
        <Glyph w={18} h={12}>
          <path d="M6 0h12v7H6zM7 1v5h10V1zM9 2.500h3v2H9zM13 3h3v1h-3zM3 3h2v1H4v5h9V8h1v2H3zM0 5h2v1H1v5h8v1H0z" fillRule="evenodd" />
        </Glyph>
        <Folder />
        <CompIcon />
        <Depth>8 bpc</Depth>
        <Glyph w={11} h={13} line><path d="M0 2.500h11M3.500 2V.5h4V2M1.500 3v9.500h8V3M4 5v5.500M5.500 5v5.500M7 5v5.500" /></Glyph>
        <ScrollPill />
      </ProjectFoot>
    </Panel>
  );
}

function Composition() {
  return (
    <Panel>
      <CompTab>
        <CloseX />
        <Swatch $color="#a89678" />
        <Glyph w={9} h={11}><path d="M0 5h9v6H0zM3.500 6.500v3h2v-3z" fillRule="evenodd" /><path d="M2.500 5V2.500a2 2 0 014 0V3.500" fill="none" stroke="currentColor" strokeWidth="1.300" /></Glyph>
        <span>Composición</span>
        <a href="#comp">{COMP}</a>
        <MenuLines />
      </CompTab>
      <Crumbs><a href="#comp">{COMP}</a></Crumbs>
      <Viewer>
        <Starter>
          <Glyph w={96} h={60} line>
            <rect x="1" y="1" width="94" height="58" rx="1.500" strokeWidth="1.400" />
            <Shapes x={28} />
          </Glyph>
          <span>Nueva composición</span>
        </Starter>
        <Starter>
          <Glyph w={113} h={60} line>
            <path d="M18.500 15V2.500c0-1 .5-1.500 1.500-1.500h90.500c1 0 1.500.5 1.500 1.500v55c0 1-.5 1.500-1.500 1.500H38" strokeWidth="1.400" />
            <rect x="1" y="17.500" width="34.500" height="41.500" rx="1.500" strokeWidth="1.400" />
            {[22, 29, 36, 43, 50].map((y) => (
              <g key={y}><rect x="5.500" y={y} width="3" height="3.500" /><rect x="28" y={y} width="3" height="3.500" /></g>
            ))}
            <Shapes x={46} />
          </Glyph>
          <span>Nueva composición a partir del material de archivo</span>
        </Starter>
      </Viewer>
      <FootBar>
        <ViewButton aria-label="Previsualizar siempre"><Glyph w={14} h={12}><path d="M0 0h9v7H0zM3 1.500v4l3.500-2zM10.500 2.500v6H3v1h8.500v-7zM12.800 4.500v6H5v1h9v-7z" fillRule="evenodd" /></Glyph></ViewButton>
        <ViewButton aria-label="Visor principal"><Glyph w={13} h={12}><path d="M.5 1h12v8h-12zM1.500 2v6h10V2zM6 9h1v2h3v1H3v-1h3z" fillRule="evenodd" /></Glyph></ViewButton>
        <ViewButton aria-label="Máscara"><Glyph w={16} h={14}><path d="M0 3c0-4 5-3 8-1.500C11-.2 16-1 16 3c0 4-2.500 5-4.500 5S8.500 6.500 8 6C7.500 6.500 6.500 8 4.500 8S0 7 0 3zM2.500 4a2.200 1.600 0 004.400 0 2.200 1.600 0 00-4.400 0zM9.200 4a2.200 1.600 0 004.400 0 2.200 1.600 0 00-4.400 0zM9 10h6l-3 3z" fillRule="evenodd" /></Glyph></ViewButton>
        <Drop $w={68}><select aria-label="Aumento"><option>(100%)</option></select><Chevron /></Drop>
        <ViewButton aria-label="Cuadrícula"><Glyph w={15} h={14}><path d="M1.500 1.500h11v9h-11zM7 0v4M7 8v4M0 6h4.500M9.500 6H14M5.500 6h3M7 4.500v3" fill="none" stroke="currentColor" /><path d="M10 11h5l-2.500 3z" /></Glyph></ViewButton>
        <Spacer $w={1} />
        <ViewButton $on aria-label="Máscaras visibles"><Glyph w={15} h={12} line><path d="M1.500 10.500C2 5.500 4 3 7 1.500h6v9z" /><path d="M0 9h3v3H0zM5.500 0h3v3h-3zM11.500 0h3v3h-3zM11.500 9h3v3h-3z" fill="currentColor" stroke="none" /></Glyph></ViewButton>
        <TimeText>0:00:09:05</TimeText>
        <ViewButton aria-label="Instantánea"><Glyph w={14} h={11}><path d="M0 2h4l1-2h4l1 2h4v9H0zM7 3a3 3 0 100 6 3 3 0 000-6zM7 4.500a1.500 1.500 0 110 3 1.500 1.500 0 010-3z" fillRule="evenodd" /></Glyph></ViewButton>
        <ViewButton $faded aria-label="Mostrar instantánea"><Glyph w={14} h={13} line><circle cx="10.500" cy="3" r="2.500" /><circle cx="3.500" cy="9" r="2.500" /><circle cx="9.500" cy="9" r="2.500" /><path d="M2 6.500L6 3M6 9h1" strokeWidth="2" /></Glyph></ViewButton>
        <ViewButton aria-label="Canales"><Glyph w={14} h={14}><circle cx="6" cy="3.500" r="3" fill="#f01818" /><circle cx="3" cy="7.500" r="3" fill="#14a814" /><circle cx="8.500" cy="7.500" r="3" fill="#3866f0" /><path d="M8 10.500h5.500L10.800 13.500z" /></Glyph></ViewButton>
        <Drop $w={85}><select aria-label="Resolución"><option>Mitad</option></select><Chevron /></Drop>
        <ViewButton aria-label="Región de interés"><Glyph w={14} h={12}><path d="M0 0h14v12H0zM1.300 1.300v9.400h11.400V1.300zM4 3.500h6v5H4z" fillRule="evenodd" /></Glyph></ViewButton>
        <ViewButton aria-label="Transparencia"><Glyph w={14} h={11}><path d="M0 0h14v11H0zM1 1v9h12V1z" fillRule="evenodd" /><path d="M2 1h2v2H2zM6 1h2v2H6zM10 1h2v2h-2zM4 3h2v2H4zM8 3h2v2H8zM2 5h2v2H2zM6 5h2v2H6zM10 5h2v2h-2zM4 7h2v2H4zM8 7h2v2H8z" opacity=".6" /></Glyph></ViewButton>
        <Drop $w={105}><select aria-label="Cámara"><option>Cámara activa</option></select><Chevron /></Drop>
        <Drop $w={69}><select aria-label="Vistas"><option>1 Vista</option></select><Chevron /></Drop>
        <ViewButton aria-label="Proporción de píxel"><Glyph w={16} h={12} line><path d="M0 2.500h16M3 .5l-2.500 2L3 4.500M13 .5l2.500 2-2.500 2M4.500 6h7v5.500h-7z" /></Glyph></ViewButton>
        <ViewButton $on $flip aria-label="Previsualización rápida"><Glyph w={14} h={13}><path d="M9 11.500H.5V.5h13V8" fill="none" stroke="currentColor" /><path d="M8.500 1.500L4 7h2.500L5 10.500 10 5.500H7.500zM9 9h5l-2.500 3z" /></Glyph></ViewButton>
        <ViewButton aria-label="Línea de tiempo"><Glyph w={13} h={11}><path d="M.5 2v8.500h12V2M3 7v3M5 6v4M8 6v4M10 7v3" fill="none" stroke="currentColor" /><path d="M4.500 0h4v3L6.500 5l-2-2zM6 4h1v6H6z" /></Glyph></ViewButton>
        <ViewButton aria-label="Diagrama de flujo"><Flow /></ViewButton>
        <Sep $tight />
        <ViewButton aria-label="Restablecer exposición"><Glyph w={12} h={12}><path d="M6 0a6 6 0 100 12A6 6 0 006 0zM6 3.800L8.200 5v2.200L6 8.300 3.800 7.200V5z" fillRule="evenodd" /><path d="M8.200 5L5 0M8.200 7.200L11.500 3M6 8.300L11 9M3.800 7.200L7 12M3.800 5L.5 9M6 3.800L1 3" stroke="#232323" strokeWidth=".9" /></Glyph></ViewButton>
        <Exposure href="#exposicion">+0,0</Exposure>
      </FootBar>
    </Panel>
  );
}

function SideColumn() {
  return (
    <Side>
      <SideStack>
        {sideTabs.map((t) => <SideTab key={t}>{t}</SideTab>)}
        <LibTab>Bibliotecas<MenuLines /></LibTab>
        <LibTools>
          <LibPick><select aria-label="Biblioteca"><option>Mi biblioteca</option></select><Caret /></LibPick>
          <Glyph w={12} h={11}><path d="M0 0h5v5H0zM7 0h5v5H7zM0 6h5v5H0zM7 6h5v5H7z" fill="#2fb6e8" /></Glyph>
          <Glyph w={12} h={12}><path d="M0 0h12v2H0zM0 3h12v2H0zM0 6h12v2H0zM0 9h12v2H0z" /></Glyph>
        </LibTools>
        <StockSearch>
          <input aria-label="Buscar en Adobe Stock" placeholder="Buscar en Adobe Stock" />
          <button aria-label="Opciones"><Glyph w={7} h={6}><path d="M0 0h7L3.500 6z" /></Glyph></button>
        </StockSearch>
        <Library>
          <Glyph w={84} h={97} line>
            <rect x="20.500" y=".7" width="24" height="30" rx="2" strokeWidth="1.400" />
            <circle cx="32.500" cy="26" r="1.200" />
            <path d="M49 14a36 36 0 0132 40M17 29a37 37 0 00-4 36M41 84.500a38 38 0 0024-5" strokeWidth="1.400" strokeDasharray="4 3.500" />
            <path d="M39.500 54.500H35.500V39.500h15.500v4.500M40.500 44h14.500v14.500H40.500z" strokeWidth="1.300" />
            <path d="M48 44v9l2.500-2 2.500 2v-9z" fill="currentColor" />
            <rect x="1" y="67.500" width="36" height="21" rx="1" strokeWidth="1.400" />
            <path d="M14.500 90l-3 5h14l-3-5" strokeWidth="1.400" />
            <rect x="69" y="59" width="14.500" height="24.500" rx="1.500" strokeWidth="1.400" />
            <circle cx="76" cy="79" r="1" />
          </Glyph>
          <strong>da a los recursos desde cualquier</strong>
          <p>Las bibliotecas le</p>
        </Library>
      </SideStack>
      <SideScroll />
    </Side>
  );
}

function TimelinePanel() {
  return (
    <Timeline>
      <TimelineTab>
        <CloseX />
        <Swatch $color="#a89678" />
        <span>{COMP}</span>
        <MenuLines />
      </TimelineTab>
      <TimelineBody>
        <Layers>
          <Controls>
            <TimeCode><strong>0:00:09:05</strong>00221 (24.00 fps)</TimeCode>
            <LayerSearch $flush><SearchCaret /><input aria-label="Buscar capas" /></LayerSearch>
            <ControlButton $w={30} aria-label="Minidiagrama de flujo"><Glyph w={18} h={13}><path d="M0 1.500h5V0h4v1.500h2V0h5v4h-5V2.500H9.500v6H11V7h5v4h-5V9.500H8.500v-6H5v-1H0zM12 .8v2h3V.8zM12.500 11.500h5L15 14z" /></Glyph></ControlButton>
            <Spacer $w={3} />
            <ControlButton $w={32} aria-label="Borrador 3D"><Glyph w={18} h={17}><path d="M5 0v9M.5 4.500h9M1.800 1.300l6.400 6.400M8.200 1.300L1.800 7.700M12 6.500l5 2.500v4.500L12 16l-5-2.500V9zM7 9l5 2.500L17 9M12 11.500V16" fill="none" stroke="currentColor" /></Glyph></ControlButton>
            <Spacer $w={3} />
            <ControlButton $w={30} aria-label="Capas tímidas"><Glyph w={16} h={12}><path d="M2 5a6 6 0 0112 0z" /><path d="M7.500 5h1v5h-1z" /><path d="M0 7h16v5H0z" opacity=".6" /></Glyph></ControlButton>
            <ControlButton $w={22} aria-label="Fusión de fotogramas"><Glyph w={14} h={14}><path d="M0 3h1v10h9v1H0zM2 1.500h1V12h9v.8H2zM4 0h10v11H4zM7 1v9h4V1zM5 1h1v1.500H5zM5 4h1v1.500H5zM5 7h1v1.500H5zM12 1h1v1.500h-1zM12 4h1v1.500h-1zM12 7h1v1.500h-1z" fillRule="evenodd" /><path d="M7 1h4v9H7z" opacity=".7" /></Glyph></ControlButton>
            <ControlButton $w={29} aria-label="Desenfoque de movimiento"><Glyph w={14} h={14}><circle cx="9" cy="5" r="4.500" fill="#808080" stroke="currentColor" /><path d="M4 4.500a4.500 4.500 0 106 6M2.500 6a4.500 4.500 0 105.500 7" fill="none" stroke="currentColor" /></Glyph></ControlButton>
            <Spacer $w={4} />
            <ControlButton $w={32} aria-label="Editor de gráficos"><Glyph w={16} h={15} line><path d="M1.500 1.500h13v12h-13zM0 4.500h1.500M0 7.500h1.500M0 10.500h1.500M4.500 0v1.500M8 0v1.500M11.500 0v1.500M3 4c4 0 4 6 10 6.500" /></Glyph></ControlButton>
          </Controls>
          <LayerTable>
            <colgroup>
              <col style={{ width: 3 }} />
              {[0, 1, 2, 3].map((n) => <col key={n} style={{ width: 15 }} />)}
              <col style={{ width: 18 }} /><col style={{ width: 18 }} /><col style={{ width: 33 }} /><col style={{ width: 130 }} /><col style={{ width: 4 }} />
              {[0, 1, 2, 3, 4, 5, 6, 7].map((n) => <col key={n} style={{ width: 15 }} />)}
              <col style={{ width: 73 }} /><col />
            </colgroup>
            <thead>
              <tr>
                <th />
                <th><Center><Eye /></Center></th>
                <th><Center><Glyph w={12} h={10}><path d="M0 3h2.500L6 0v10L2.500 7H0z" /><path d="M7.500 2.500a3.500 3.500 0 010 5M8.500.5a5.500 5.500 0 010 9" fill="none" stroke="currentColor" /></Glyph></Center></th>
                <th><Center><Glyph w={7} h={7}><circle cx="3.500" cy="3.500" r="3.500" /></Glyph></Center></th>
                <th><Center><Glyph w={9} h={11}><path d="M0 5h9v6H0zM4 6.500v3h1v-3z" fillRule="evenodd" /><path d="M2 5V3a2.500 2.500 0 015 0v2" fill="none" stroke="currentColor" strokeWidth="1.300" /></Glyph></Center></th>
                <th><Spaced><HeadCell /></Spaced></th>
                <th><Tag /></th>
                <th><HeadCell>#<span>.</span></HeadCell></th>
                <th><HeadCell>Nombre de origen</HeadCell></th>
                <th><HeadCell /></th>
                <th><Center><Shy /></Center></th>
                <th><Center><Glyph w={11} h={11} line><circle cx="5.500" cy="5.500" r="1.800" /><path d="M5.500 0v3M5.500 8v3M0 5.500h3M8 5.500h3M1.600 1.600l2 2M7.400 7.400l2 2M9.400 1.600l-2 2M3.600 7.400l-2 2" /></Glyph></Center></th>
                <th><Center><Glyph w={11} h={10} line><path d="M0 .5l11 9" strokeWidth="1.500" strokeDasharray="3 1.500" /></Glyph></Center></th>
                <th><Center><Fx>fx</Fx></Center></th>
                <th><Center><FilmStack /></Center></th>
                <th><Center><MotionBlur /></Center></th>
                <th><Center><Glyph w={11} h={11}><circle cx="5.500" cy="5.500" r="4.800" fill="none" stroke="currentColor" /><path d="M9 2A5 5 0 012 9z" /></Glyph></Center></th>
                <th><Center><Cube /></Center></th>
                <th />
                <th><HeadCell>Principal y enlace<EndMark /></HeadCell></th>
              </tr>
            </thead>
            <tbody>
              <tr>
                <td />
                <td><Center $box><Eye /></Center></td>
                <td />
                <td><Center $box /></td>
                <td><Center $box /></td>
                <td><RightGlyph><Glyph w={8} h={8}><path d="M0 0l8 4-8 4z" /></Glyph></RightGlyph></td>
                <td><Spaced><Swatch $color="#a8a6c8" $size={12} /></Spaced></td>
                <td><Num>1</Num></td>
                <td><LayerName><ImageFile />canonfo....4cac8.jpg</LayerName></td>
                <td />
                <td><Center $box><Shy /></Center></td>
                <td />
                <td><Center $box><Glyph w={11} h={10} line><path d="M.5 9.500L10.500.5" strokeWidth="1.300" /></Glyph></Center></td>
                <td />
                <td />
                <td><Center $box /></td>
                <td><Center $box /></td>
                <td><Center $box /></td>
                <td />
                <td>
                  <ParentCell>
                    <Glyph w={12} h={11} line><path d="M6.500 6.500c-1.500 0-2-1.500-1-2.500 1.500-1 3.500 0 3.500 2S7 9 5 8.500 2 5.500 3 3.500 7.500.5 9.500 1.500 12 6.500 10 8.500 4 11 1.500 9" /></Glyph>
                    <Drop $w={88} $flat><select aria-label="Capa principal"><option>Ninguno</option></select><Chevron /></Drop>
                  </ParentCell>
                </td>
              </tr>
            </tbody>
          </LayerTable>
        </Layers>
        <Tracks>
          <Range $h={10} $tone="#696969"><i /><span /><i /></Range>
          <Ruler>{marks.map((m) => <Mark key={m}>{m}</Mark>)}</Ruler>
          <Range $h={17} $tone="#5f5f5f"><i /><span /><i /></Range>
          <LayerBar />
          <Lane />
          <Overlay>
            <Playhead style={{ left: `${(221 / 24 / 30) * 100}%` }}>
              <Glyph w={11} h={14}><path d="M0 0h11v7l-5.500 6.500L0 7z" fill={c.blue} /><path d="M5 6h1v7H5zM4 6h3v1H4z" fill="#10243c" /></Glyph>
            </Playhead>
          </Overlay>
        </Tracks>
        <MarkerColumn>
          <Glyph w={11} h={14}><path d="M0 1l1-1h9l1 1v8.500L5.500 14 0 9.500z" /></Glyph>
          <Glyph w={14} h={12}><path d="M8 2h6v7H8z" /><path d="M6 0v4M7 .5L1 6.500h4" fill="none" stroke="currentColor" strokeWidth="1.200" /><circle cx="6.500" cy="8" r="3" fill={c.panel} stroke="currentColor" strokeWidth="1.300" /></Glyph>
        </MarkerColumn>
      </TimelineBody>
      <TimelineFoot>
        <FootButton $on aria-label="Conmutadores de capa"><Glyph w={11} h={11} line><path d="M4.500 4.500h6v6h-6zM4 8.500H2.500v-6h6V4M2 6.500H.5v-6h6V2M7.500 6v3M6 7.500h3" /></Glyph></FootButton>
        <FootButton aria-label="Controles de transferencia"><Glyph w={11} h={11} line><circle cx="4.500" cy="4.500" r="4" /><path d="M4.500 4.500h6v6h-6zM5 8l3-3" /></Glyph></FootButton>
        <FootButton aria-label="Entrada y salida"><Glyph w={11} h={11}><path d="M3 0h5v11H3z" opacity=".7" /><path d="M2 1h1v9H2V8L0 5.500 2 3zM9 1H8v9h1V8l2-2.500L9 3z" /></Glyph></FootButton>
        <ToggleModes>Conmutar definidores / modos</ToggleModes>
        <Glyph w={10} h={4}><path d="M0 4l4-4h2l4 4z" /></Glyph>
        <ZoomSlider type="range" min="0" max="100" defaultValue="0" aria-label="Escala de tiempo" />
        <Glyph w={17} h={6}><path d="M0 6l5-4 1.500 1L10 0h1l6 6z" /></Glyph>
      </TimelineFoot>
    </Timeline>
  );
}

function Desktop() {
  return (
    <TaskBar>
      <SystemItem aria-label="Inicio"><Glyph w={16} h={16}><path d="M0 2.300L6.600 1.300v6.300H0zM7.400 1.200L16 0v7.600H7.400zM0 8.400h6.600v6.300L0 13.700zM7.400 8.400H16V16l-8.600-1.200z" /></Glyph></SystemItem>
      <SystemItem aria-label="Buscar"><Glyph w={17} h={16} line><circle cx="10.500" cy="6" r="5.300" strokeWidth="1.300" /><path d="M6.500 10L.8 15.500" strokeWidth="1.300" /></Glyph></SystemItem>
      <SystemItem aria-label="Vista de tareas"><Glyph w={18} h={16}><path d="M1 0v3h10V0M1 5.500h10v5H1zM1 16v-3h10v3M15 0v16" fill="none" stroke="currentColor" strokeWidth="1.200" /><path d="M13.500 4h3v3h-3z" /></Glyph></SystemItem>
      <TaskItem $first $open aria-label="Explorador de archivos">
        <Glyph w={22} h={18}>
          <path d="M0 1h8l1 2h13v14H0z" fill="#f5c64a" /><path d="M0 5h22v12.500H0z" fill="#fde296" />
          <path d="M1 0h7v1.500H1z" fill="#e8a33c" /><path d="M4 18v-6c0-1 .5-1.500 1.500-1.500h11c1 0 1.500.5 1.500 1.500v6h-4v-3.500H8V18z" fill="#36b0e4" />
        </Glyph>
      </TaskItem>
      <TaskItem $open aria-label="Google Chrome">
        <Glyph w={22} h={22}>
          <circle cx="11" cy="11" r="11" fill="#fbcc3c" />
          <path d="M11 11L1.500 5.500A11 11 0 0120.500 5.500z" fill="#de4a3c" />
          <path d="M1.500 5.500A11 11 0 0010 22l5-8.500-4-2.500z" fill="#1ea15a" />
          <path d="M1.500 5.500L6 13.500 11 11V6h9.700a11 11 0 00-19.200-.5z" fill="#de4a3c" />
          <circle cx="11" cy="11" r="5.200" fill="#fff" /><circle cx="11" cy="11" r="4.100" fill="#4a88ee" />
        </Glyph>
      </TaskItem>
      <TaskItem aria-label="Minecraft">
        <Glyph w={24} h={24}>
          <path d="M3 7l9-3 9 3-6 4z" fill="#6b4a2e" /><path d="M3 7l12 4v12L4 19z" fill="#8a5a33" /><path d="M15 11l6-4 1 11-7 5z" fill="#52331d" />
          <path d="M5 10l3 1v8l-3-1zM10 12l3 1v8l-3-1z" fill="#b9824e" /><path d="M7 9h2v12H7z" fill="#5e3a20" />
          <path d="M1 2l4-1 7 6-3 2z" fill="#8d7f70" /><path d="M6 4l4-3 3 1-2 5z" fill="#8c3a2c" />
          <path d="M14 2c5-1 9 3 9 9" fill="none" stroke="#d4d4d4" strokeWidth="2.500" /><path d="M13 6l5 7" stroke="#3f6e35" strokeWidth="2.500" /><path d="M17 14h3v4h-3z" fill="#a54030" />
        </Glyph>
      </TaskItem>
      <TaskItem aria-label="FL Studio">
        <Glyph w={22} h={22}>
          <circle cx="11" cy="11" r="11" fill="#4a504f" /><circle cx="11" cy="11" r="10" fill="#101414" />
          <path d="M5 8c3-2 9-2 12 0 1 6-4 11-8 13C6 18 3.500 13 5 8z" fill="#f0861a" /><path d="M7 10c2-1 4-1 5 0 0 4-1 7-2 9-2-2-4-6-3-9z" fill="#ffd060" />
          <path d="M5 8c-1-4 2-6 6-5 2-2 6 0 6 4-2-1-3 2-6 1S7 9 5 8z" fill="#4c9c3a" /><path d="M9 4c2-1 3 0 4 2" fill="none" stroke="#bfe4a8" />
        </Glyph>
      </TaskItem>
      <TaskItem $active aria-label="After Effects"><AeBadge $big>Ae</AeBadge></TaskItem>
      <Spacer />
      <TrayItem $w={40} aria-label="Contactos"><Glyph w={15} h={15} line><circle cx="10" cy="3.300" r="2.600" strokeWidth="1.200" /><circle cx="4.500" cy="7.500" r="2.300" strokeWidth="1.200" /><path d="M.7 14.500c0-6 7.600-6 7.600 0M8 7.500c3-2.500 6 0 6 3" strokeWidth="1.200" /></Glyph></TrayItem>
      <TrayItem $w={32} aria-label="Iconos ocultos"><Glyph w={12} h={7} line><path d="M.7 6.300L6 1l5.300 5.300" strokeWidth="1.300" /></Glyph></TrayItem>
      <TrayItem $w={16} aria-label="ESET"><Glyph w={16} h={16}><rect width="14" height="14" rx="6" fill="#12a0a8" /><path d="M3.500 7.200h7a3.300 3.300 0 10-1 2.500" fill="none" stroke="#fff" strokeWidth="1.800" /><path d="M11.500 8l4.500 7.500H7z" fill="#e0453c" /><path d="M11 10.500h1v2.500h-1zM11 13.700h1v1h-1z" fill="#fff" /></Glyph></TrayItem>
      <TrayItem $w={34} aria-label="Batería"><Glyph w={16} h={12}><path d="M4.500 3.500h9.500v7H4.500zM15 5.500v3" fill="none" stroke="currentColor" /><path d="M7 5h5.500v4H6zM0 2h4v3L2.800 6v4H1.500V6L0 5zM.5 0h1v2h-1zM2.800 0h1v2h-1z" /></Glyph></TrayItem>
      <TrayItem $w={13} aria-label="Wi-Fi"><Glyph w={13} h={13}><path d="M1 12A11 11 0 0112 1" fill="none" stroke="currentColor" opacity=".6" /><path d="M4 12a8 8 0 018-8M7 12a5 5 0 015-5" fill="none" stroke="currentColor" strokeWidth="1.200" /><circle cx="11" cy="11" r="1.700" /></Glyph></TrayItem>
      <TrayItem $w={33} aria-label="Volumen"><Glyph w={17} h={13} line><path d="M.6 4.500h2.600L6.500 1.300v10.400L3.200 8.500H.6z" /><path d="M8.500 4.500a3 3 0 010 4" /><path d="M10.500 3a5 5 0 010 7M12.800 1.300a8 8 0 010 10.400" opacity=".6" /></Glyph></TrayItem>
      <TrayItem $w={26} aria-label="Idioma">ESP</TrayItem>
      <Clock>23:18<br />17/7/2018</Clock>
      <TrayItem $w={38} aria-label="Notificaciones"><Glyph w={17} h={16} line><path d="M.7.7h15.600v11.600H11l-2.500 2.500L6 12.300H.7z" strokeWidth="1.200" /></Glyph></TrayItem>
      <Spacer $w={9} />
      <ShowDesktop aria-label="Mostrar escritorio" />
    </TaskBar>
  );
}

export default function App() {
  return (
    <Shell>
      <GlobalStyle />
      <TitleBar>
        <AeBadge>Ae</AeBadge>
        <Title>Adobe After Effects CC 2018 - Proyecto sin título.aep *</Title>
        <WinButton aria-label="Minimizar"><Glyph w={10} h={1}><path d="M0 0h10v1H0z" /></Glyph></WinButton>
        <WinButton aria-label="Restaurar"><Glyph w={10} h={10} line><path d="M.5 2.500h7v7h-7zM2.500 2.500v-2h7v7h-2" /></Glyph></WinButton>
        <WinButton aria-label="Cerrar"><Glyph w={10} h={10} line><path d="M0 0l10 10M10 0L0 10" strokeWidth="1.200" /></Glyph></WinButton>
      </TitleBar>
      <MenuBar>{menu.map((m) => <a key={m} href={`#${m}`}>{m}</a>)}</MenuBar>
      <Tools />
      <Workspace>
        <Project />
        <Composition />
        <SideColumn />
      </Workspace>
      <TimelinePanel />
      <Desktop />
    </Shell>
  );
}
